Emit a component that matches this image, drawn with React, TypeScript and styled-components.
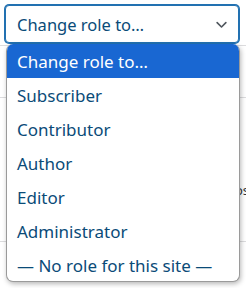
import React from 'react'
import styled, { createGlobalStyle } from 'styled-components'

const GlobalStyle = createGlobalStyle`
  html, body {
    margin: 0;
    padding: 0;
    background: #fff;
    overflow: hidden;
  }
  body {
    font-family: "Noto Sans", "Open Sans", sans-serif;
  }
`

const Page = styled.div`
  position: relative;
  width: 246px;
  height: 288px;
  overflow: hidden;
  background: #fff;
`
const Table = styled.div`
  position: absolute;
  inset: 0;
  display: flex;
  flex-direction: column;
`
const Row = styled.div<{ $h: number }>`
  height: ${p => p.$h}px;
  border-bottom: 1px solid #dcdcde;
  position: relative;
  flex-shrink: 0;
`
const CellText = styled.span`
  position: absolute;
  right: -14px;
  top: 83px;
  font-size: 13px;
  color: #2c3338;
`
const SelectBox = styled.div`
  position: absolute;
  top: 5px;
  left: 5px;
  width: 234px;
  height: 38px;
  box-sizing: border-box;
  border: 1px solid #2271b1;
  box-shadow: 0 0 0 1px #2271b1;
  border-radius: 4px;
  background: #fff;
  display: flex;
  align-items: center;
  justify-content: space-between;
  padding: 0 9px 0 11px;
  color: #0a4b78;
  font-size: 16.5px;
`
const Chevron = styled.svg`
  width: 15px;
  height: 15px;
  color: #50575e;
`
const List = styled.ul`
  position: absolute;
  top: 44px;
  left: 6px;
  width: 234px;
  height: 238px;
  box-sizing: border-box;
  margin: 0;
  padding: 0;
  list-style: none;
  background: #fff;
  border: 1px solid #9a9a9a;
  border-top: none;
  border-radius: 7px;
  overflow: hidden;
  box-shadow: 1px 2px 5px rgba(0, 0, 0, 0.28);
`
const Option = styled.li<{ $active?: boolean }>`
  height: 34px;
  display: flex;
  align-items: center;
  padding-left: 10px;
  font-size: 17px;
  color: ${p => (p.$active ? '#fff' : '#0a4b78')};
  background: ${p => (p.$active ? '#1967d2' : 'transparent')};
  white-space: nowrap;
`

const roles = [
  'Change role to…',
  'Subscriber',
  'Contributor',
  'Author',
  'Editor',
  'Administrator',
  '— No role for this site —',
]

export default function App() {
  return (
    <>
      <GlobalStyle />
      <Page>
        <Table>
          <Row $h={45} />
          <Row $h={51} />
          <Row $h={143}>
            <CellText>Posts</CellText>
          </Row>
        </Table>
        <SelectBox>
          <span>Change role to…</span>
          <Chevron viewBox="0 0 24 24" fill="none" stroke="currentColor" strokeWidth="2.6" strokeLinecap="round" strokeLinejoin="round">
            <path d="M5 9l7 7 7-7" />
          </Chevron>
        </SelectBox>
        <List>
          {roles.map((r, i) => (
            <Option key={r} $active={i === 0}>{r}</Option>
          ))}
        </List>
      </Page>
    </>
  )
}
